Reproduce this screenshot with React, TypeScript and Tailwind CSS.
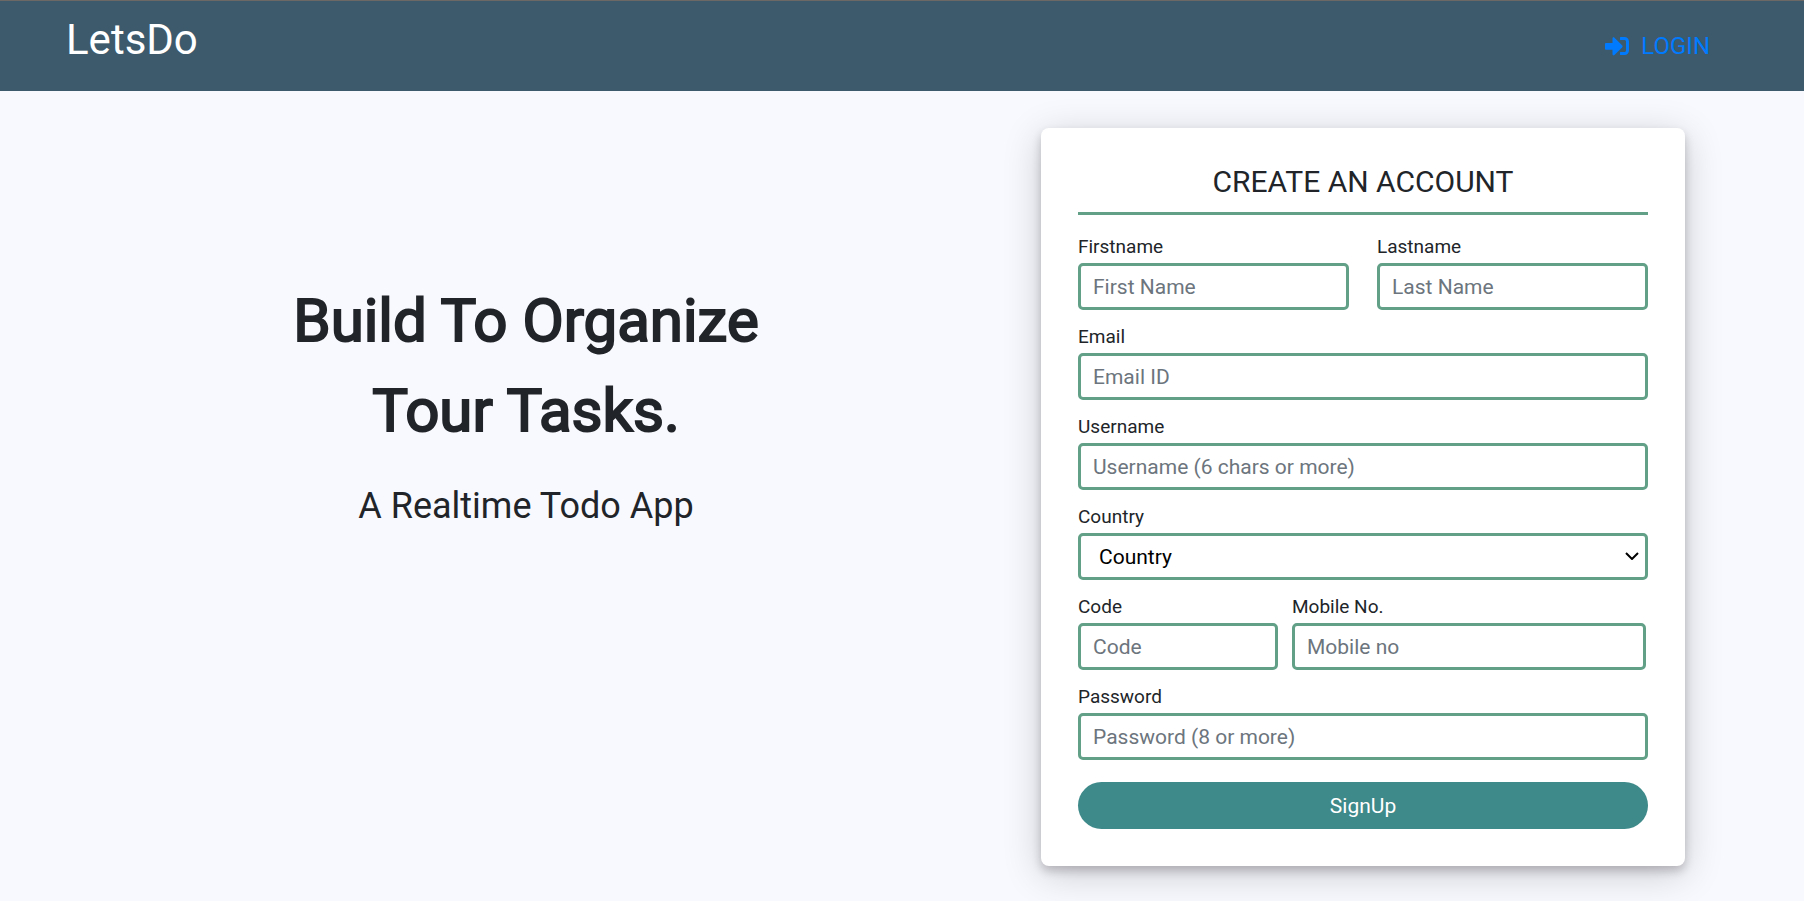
import type { InputHTMLAttributes, ReactNode } from "react";
import { FaSignInAlt } from "react-icons/fa";

const control =
  "block h-[47px] w-full rounded-[5px] border-3 border-[#63a088] bg-white px-3 text-[21px] leading-[30px] outline-none placeholder:text-[#6c757d] placeholder:opacity-100 focus:ring-3 focus:ring-[#63a088]/30";

function Field({ id, label, children }: { id: string; label: string; children: ReactNode }) {
  return (
    <div className="min-w-0">
      <label htmlFor={id} className="mb-[2px] block text-[19px] leading-7">
        {label}
      </label>
      {children}
    </div>
  );
}

function TextField({
  id,
  label,
  ...rest
}: { id: string; label: string } & InputHTMLAttributes<HTMLInputElement>) {
  return (
    <Field id={id} label={label}>
      <input id={id} name={id} type="text" className={control} {...rest} />
    </Field>
  );
}

function SignUpForm() {
  return (
    <form
      onSubmit={(e) => e.preventDefault()}
      className="rounded-[8px] bg-white p-[37px] shadow-[0_5px_10px_0_rgba(10,0,12,0.2),0_8px_38px_0_rgba(10,0,12,0.19)]"
    >
      <h2 className="border-b-3 border-[#63a088] pb-[13px] text-center text-[30px] leading-[34px]">
        CREATE AN ACCOUNT
      </h2>
      <div className="mt-[18px] grid gap-[13px]">
        <div className="grid grid-cols-2 gap-7">
          <TextField id="firstname" label="Firstname" placeholder="First Name" />
          <TextField id="lastname" label="Lastname" placeholder="Last Name" />
        </div>
        <TextField id="email" label="Email" type="email" placeholder="Email ID" />
        <TextField id="username" label="Username" placeholder="Username (6 chars or more)" />
        <Field id="country" label="Country">
          <div className="relative">
            <select id="country" name="country" className={`${control} appearance-none pl-[18px] text-black`}>
              <option>Country</option>
            </select>
            <svg
              viewBox="0 0 14 8"
              className="pointer-events-none absolute top-[19px] right-[9px] h-2 w-[14px]"
              fill="none"
              stroke="#000"
              strokeWidth="2"
              aria-hidden="true"
            >
              <path d="M1 1l6 6 6-6" />
            </svg>
          </div>
        </Field>
        <div className="grid grid-cols-[200fr_354fr] gap-[14px] pr-[2px]">
          <TextField id="code" label="Code" placeholder="Code" />
          <TextField id="mobile" label="Mobile No." type="tel" placeholder="Mobile no" />
        </div>
        <TextField id="password" label="Password" type="password" placeholder="Password (8 or more)" />
      </div>
      <button
        type="submit"
        className="mt-[22px] block h-[47px] w-full cursor-pointer rounded-full bg-[#3e8989] text-[21px] leading-[30px] text-white"
      >
        SignUp
      </button>
    </form>
  );
}

export default function App() {
  return (
    <div className="min-h-screen bg-[#f8f9ff] font-[Roboto,sans-serif] text-[#212529]">
      <header className="flex h-[91px] items-start justify-between border-t border-[#6b6866] bg-[#3d5a6c] pr-[94px] pl-[66px]">
        <a href="#" className="mt-2 text-[42px] leading-[62px] text-white">
          LetsDo
        </a>
        <a href="#login" className="mt-[27px] flex items-center gap-3 text-[24px] leading-9 text-[#007bff]">
          <FaSignInAlt className="size-6" aria-hidden="true" />
          LOGIN
        </a>
      </header>
      <main className="grid grid-cols-[814fr_644fr] gap-x-[108px] px-[119px] pt-[37px] pb-[35px]">
        <section className="pt-[148px] text-center">
          <h1 className="text-[60px] leading-[90px] [-webkit-text-stroke:2px_#212529]">
            Build To Organize
            <br />
            Tour Tasks.
          </h1>
          <p className="mt-[23px] text-[36px] leading-[54px]">A Realtime Todo App</p>
        </section>
        <SignUpForm />
      </main>
    </div>
  );
}
